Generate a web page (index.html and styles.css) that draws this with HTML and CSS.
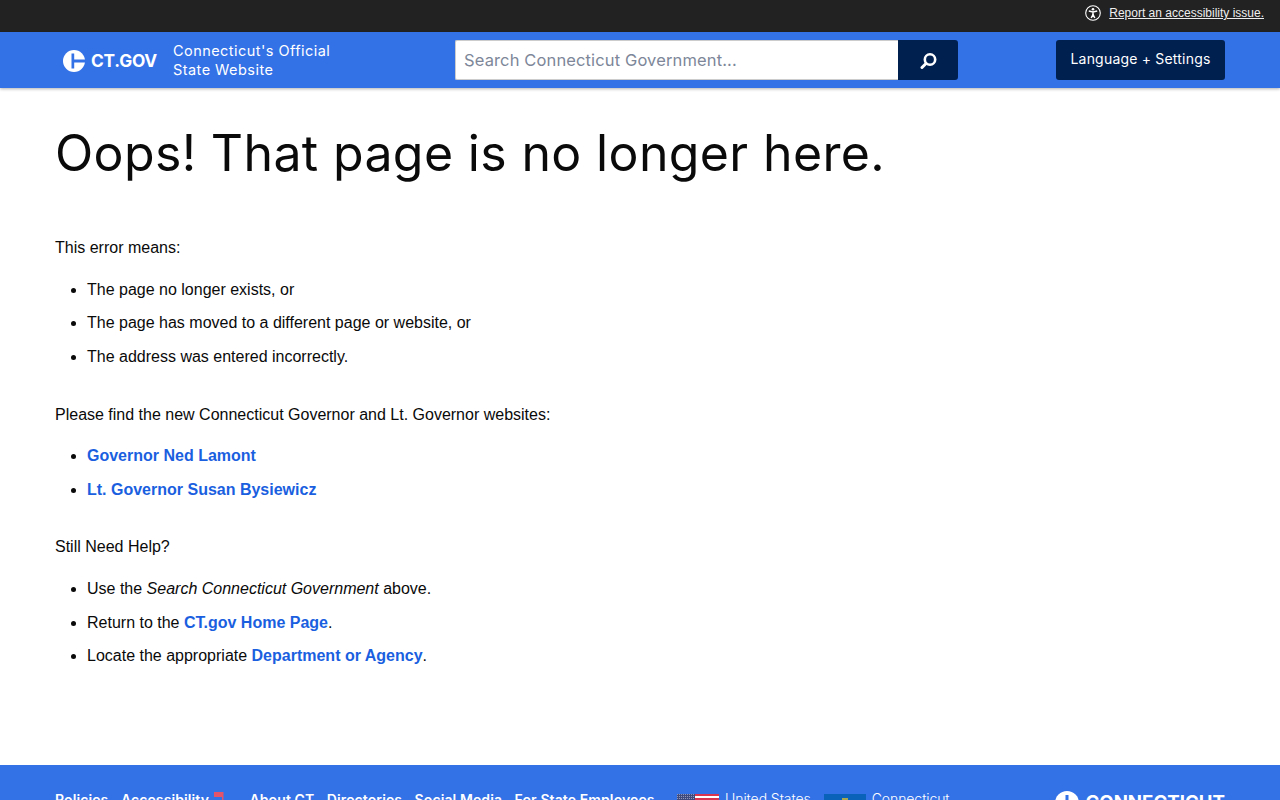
FILE: index.html
```html
<!DOCTYPE html>
<html lang="en">
<head>
<meta charset="utf-8">
<title>Oops! That page is no longer here.</title>
<link rel="stylesheet" href="styles.css">
</head>
<body>
<div class="topbar">
  <svg class="a11y-icon" viewBox="0 0 16 16" width="16" height="16" aria-hidden="true">
    <circle cx="8" cy="8" r="7.3" fill="none" stroke="#fff" stroke-width="1.1"/>
    <circle cx="8" cy="4.2" r="1.3" fill="#fff"/>
    <path d="M3.8 6.1 L8 6.9 L12.2 6.1 M8 6.9 V9.6 M8 9.6 L6.2 13 M8 9.6 L9.8 13" fill="none" stroke="#fff" stroke-width="1.5"/>
  </svg>
  <a class="topbar-link" href="#">Report an accessibility issue.</a>
</div>
<header class="site-header">
  <div class="brand">
    <svg class="brand-mark" viewBox="0 0 22 22" width="22" height="22" aria-hidden="true">
      <circle cx="11" cy="11" r="11" fill="#fff"/>
      <path d="M8.5 3.5 H11.2 V9.6 H22 V12.4 H11.2 V18.5 H8.5 Z" fill="#3371e7"/>
    </svg>
    <span class="brand-name">CT.GOV</span>
    <span class="brand-tag">Connecticut's Official<br>State Website</span>
  </div>
  <form class="search">
    <input class="search-input" type="text" placeholder="Search Connecticut Government...">
    <button class="search-btn" type="button" aria-label="Search">
      <svg viewBox="0 0 18 18" width="18" height="18" aria-hidden="true">
        <circle cx="11" cy="8.5" r="5.2" fill="none" stroke="#fff" stroke-width="2.6"/>
        <path d="M7 12.5 L3 16.5" stroke="#fff" stroke-width="3" stroke-linecap="round"/>
      </svg>
    </button>
  </form>
  <button class="lang-btn" type="button">Language + Settings</button>
</header>
<main class="content">
  <h1 class="title">Oops! That page is no longer here.</h1>
  <p class="para">This error means:</p>
  <ul class="list">
    <li>The page no longer exists, or</li>
    <li>The page has moved to a different page or website, or</li>
    <li>The address was entered incorrectly.</li>
  </ul>
  <p class="para">Please find the new Connecticut Governor and Lt. Governor websites:</p>
  <ul class="list">
    <li><a href="#">Governor Ned Lamont</a></li>
    <li><a href="#">Lt. Governor Susan Bysiewicz</a></li>
  </ul>
  <p class="para">Still Need Help?</p>
  <ul class="list">
    <li>Use the <em>Search Connecticut Government</em> above.</li>
    <li>Return to the <a href="#">CT.gov Home Page</a>.</li>
    <li>Locate the appropriate <a href="#">Department or Agency</a>.</li>
  </ul>
</main>
<footer class="site-footer">
  <nav class="foot-nav">
    <a href="#">Policies</a>
    <a href="#" class="foot-access">Accessibility
      <svg class="foot-flag" viewBox="0 0 12 12" width="12" height="12" aria-hidden="true">
        <rect x="0" y="0" width="9" height="5" fill="#e4556b"/>
        <rect x="8" y="0" width="1.5" height="12" fill="#e4556b"/>
      </svg>
    </a>
    <a href="#">About CT</a>
    <a href="#">Directories</a>
    <a href="#">Social Media</a>
    <a href="#">For State Employees</a>
  </nav>
  <div class="foot-flags">
    <div class="flag-item">
      <svg class="flag" viewBox="0 0 42 22" width="42" height="22" aria-hidden="true">
        <defs>
          <pattern id="stars" width="2" height="2" patternUnits="userSpaceOnUse">
            <rect width="2" height="2" fill="#3e4a7e"/>
            <rect width="1" height="1" fill="#8f96b8"/>
          </pattern>
        </defs>
        <rect width="42" height="22" fill="#fff"/>
        <rect width="42" height="2" y="0" fill="#d8344f"/>
        <rect width="42" height="2" y="4" fill="#d8344f"/>
        <rect width="42" height="2" y="8" fill="#d8344f"/>
        <rect width="18" height="12" fill="url(#stars)"/>
      </svg>
      <span>United States<br>Government</span>
    </div>
    <div class="flag-item">
      <svg class="flag" viewBox="0 0 42 22" width="42" height="22" aria-hidden="true">
        <rect width="42" height="22" fill="#0a63b8"/>
        <rect x="18" y="4" width="6" height="2" fill="#a8a850"/>
      </svg>
      <span>Connecticut<br>Government</span>
    </div>
  </div>
  <div class="foot-logo">
    <svg class="foot-logo-mark" viewBox="0 0 24 24" width="24" height="24" aria-hidden="true">
      <circle cx="12" cy="12" r="12" fill="#fff"/>
      <rect x="10.5" y="4" width="3" height="7" fill="#3371e7"/>
    </svg>
    <span class="foot-logo-text">CONNECTICUT</span>
  </div>
</footer>
</body>
</html>
```
FILE: styles.css
```css
* { box-sizing: border-box; }
html, body { margin: 0; padding: 0; }
body {
  font-family: "Liberation Sans", Arial, sans-serif;
  font-size: 16px;
  line-height: 24px;
  color: #0a0a0a;
  background: #fff;
}
.topbar {
  height: 32px;
  background: #222;
  display: flex;
  align-items: center;
  justify-content: flex-end;
  gap: 8px;
  padding: 0 16px 6px 0;
}
.a11y-icon { flex: none; }
.topbar-link {
  color: #eee;
  font-size: 12px;
  line-height: 14px;
  text-decoration: underline;
}
.site-header {
  height: 56px;
  background: #3371e7;
  box-shadow: 0 1px 3px rgba(0,0,0,.3);
  display: flex;
  align-items: center;
  padding: 0 55px 0 63px;
  position: relative;
}
.brand { display: flex; align-items: center; width: 392px; flex: none; }
.brand-mark { flex: none; margin-top: 2px; }
.brand-name {
  font-family: Inter, sans-serif;
  font-weight: 700;
  font-size: 17.3px;
  line-height: 22px;
  letter-spacing: -.2px;
  color: #fff;
  margin: 2px 0 0 6px;
  width: 82px;
}
.brand-tag {
  font-family: Inter, sans-serif;
  font-size: 14.5px;
  line-height: 19px;
  letter-spacing: .45px;
  color: #fff;
}
.search { display: flex; width: 503px; height: 40px; flex: none; }
.search-input {
  flex: 1;
  min-width: 0;
  border: 1px solid #ccc;
  border-right: 0;
  border-radius: 2px 0 0 2px;
  padding: 0 8px;
  font-family: Inter, sans-serif;
  font-size: 16.5px;
  letter-spacing: .13px;
  color: #333;
  background: #fff;
  outline: 0;
}
.search-input::placeholder { color: #7d8799; opacity: 1; }
.search-btn {
  width: 60px;
  border: 0;
  padding: 0;
  background: #002050;
  border-radius: 0 3px 3px 0;
  display: flex;
  align-items: center;
  justify-content: center;
}
.lang-btn {
  margin-left: auto;
  width: 169px;
  height: 40px;
  border: 0;
  padding: 0 0 3px;
  border-radius: 3px;
  background: #002050;
  color: #fff;
  font-family: Inter, sans-serif;
  font-size: 14px;
  letter-spacing: .2px;
}
.content { padding: 26px 55px 0; height: 677px; }
.title {
  margin: 0 0 44.3px;
  font-family: Inter, sans-serif;
  font-weight: 400;
  font-size: 50px;
  line-height: 78px;
  letter-spacing: .36px;
  color: #0a0a0a;
}
.para { margin: 0 0 17.6px; line-height: 24px; }
.list { margin: 0 0 33.6px; padding: 0 0 0 32px; }
.list li { margin-bottom: 9.6px; }
.list a { color: #1a5fdf; font-weight: 700; text-decoration: none; }
.site-footer {
  background: #3371e7;
  color: #fff;
  display: flex;
  align-items: flex-start;
  padding: 25px 55px 24px;
  min-height: 100px;
}
.foot-nav {
  display: flex;
  gap: 12.5px;
  font-family: Inter, sans-serif;
  font-weight: 600;
  font-size: 14px;
  line-height: 20px;
  letter-spacing: .1px;
  width: 622px;
  flex: none;
}
.foot-nav a { color: #fff; text-decoration: none; white-space: nowrap; }
.foot-access { display: inline-flex; margin-right: 11px; }
.foot-flag { margin: 2px 0 0 5px; flex: none; }
.foot-flags { display: flex; gap: 13px; font-family: Inter, sans-serif; font-size: 14px; line-height: 18px; letter-spacing: -.07px; font-weight: 300; }
.flag-item { display: flex; gap: 6px; }
.flag { flex: none; margin-top: 4px; }
.foot-logo { margin-left: auto; display: flex; align-items: center; gap: 6px; }
.foot-logo-mark { flex: none; }
.foot-logo-text { font-family: Inter, sans-serif; font-weight: 700; font-size: 18.7px; line-height: 26px; color: #fff; }
```
